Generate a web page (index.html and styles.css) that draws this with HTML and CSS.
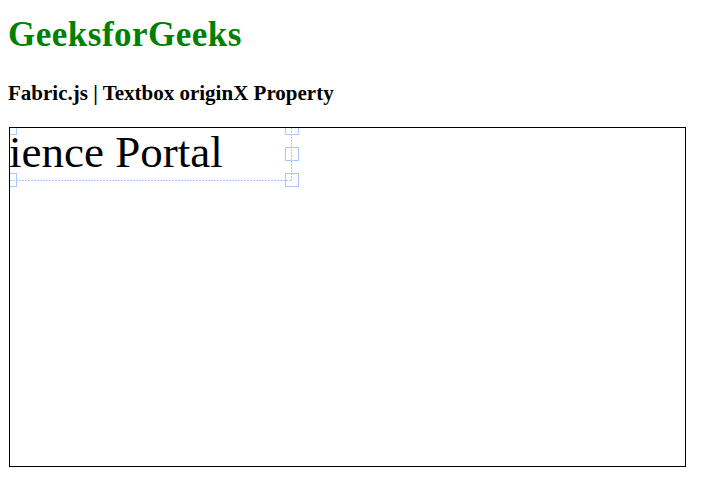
FILE: index.html
```html
<!DOCTYPE html>
<html>
<head>
<meta charset="utf-8">
<link rel="stylesheet" href="styles.css">
</head>
<body>
<h1 class="title">GeeksforGeeks</h1>
<h3 class="subtitle">Fabric.js | Textbox originX Property</h3>
<div class="canvas">
  <span class="textbox">ience Portal</span>
  <svg class="controls" width="675" height="338" viewBox="0 0 675 338">
    <g fill="none" stroke="rgb(170,200,255)" stroke-width="1">
      <line x1="0" y1="52.5" x2="281.5" y2="52.5" stroke-dasharray="2 1"/>
      <line x1="281.5" y1="0" x2="281.5" y2="52.5" stroke-dasharray="2 1"/>
      <rect x="-6.5" y="-6.5" width="13" height="13"/>
      <rect x="-6.5" y="45.5" width="13" height="13"/>
      <rect x="275.5" y="-6.5" width="13" height="13"/>
      <rect x="275.5" y="19.5" width="13" height="13"/>
      <rect x="275.5" y="45.5" width="13" height="13"/>
    </g>
  </svg>
</div>
</body>
</html>
```
FILE: styles.css
```css
body {
  margin: 8px;
  font-family: "Liberation Serif", "Times New Roman", serif;
  background: #fff;
}
.title {
  color: green;
  font-size: 35px;
  line-height: 40px;
  letter-spacing: 0.5px;
  margin: 7px 0 26px;
}
.subtitle {
  font-size: 21px;
  line-height: 24px;
  margin: 0 0 22px;
}
.canvas {
  position: relative;
  width: 675px;
  height: 338px;
  border: 1px solid #000;
  margin: 0 0 0 1px;
  overflow: hidden;
}
.textbox {
  position: absolute;
  left: -1px;
  top: 2px;
  font-size: 45px;
  line-height: 45px;
  color: #000;
  white-space: nowrap;
}
.controls {
  position: absolute;
  left: 0;
  top: 0;
}
```
